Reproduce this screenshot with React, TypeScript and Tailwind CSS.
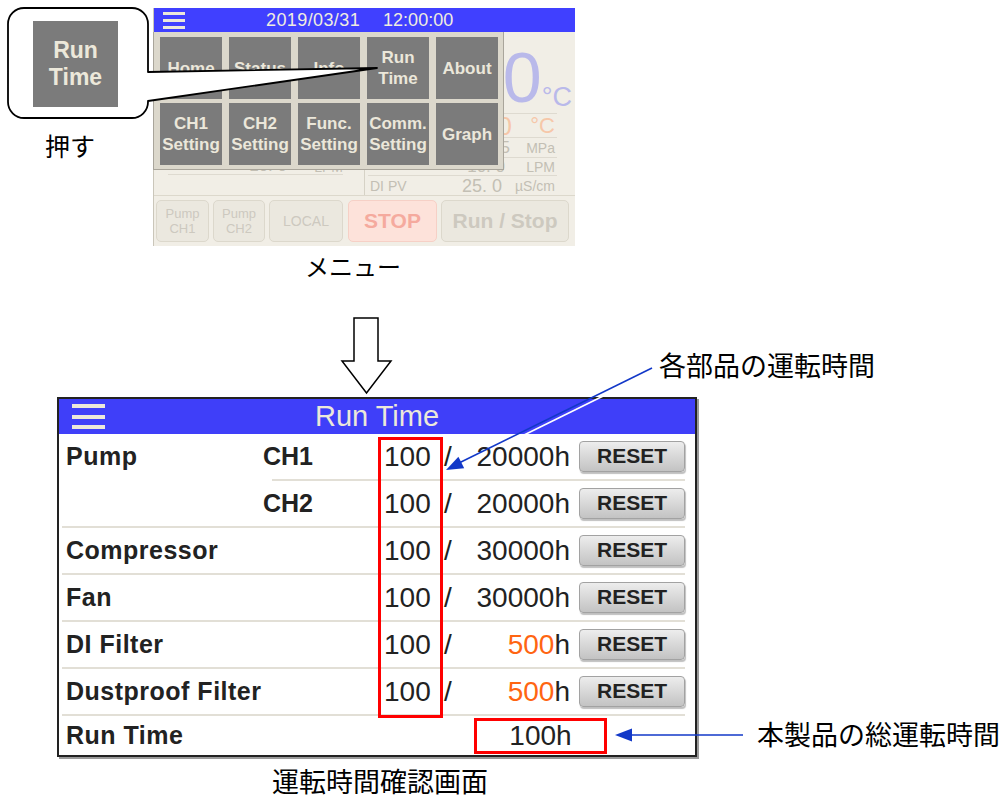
import React from "react";

const cream = "bg-[#ece8da]";

function Hamburger({ w, h, bar }: { w: string; h: string; bar: string }) {
  return (
    <div className={`flex flex-col justify-between ${w} ${h}`}>
      <div className={`${bar} ${cream} w-full`} />
      <div className={`${bar} ${cream} w-full`} />
      <div className={`${bar} ${cream} w-full`} />
    </div>
  );
}

function FadedRow({
  h,
  label,
  value,
  unit,
  valueCls,
  unitCls,
  unitW,
  clipW,
}: {
  h: string;
  label?: string;
  value: string;
  unit: string;
  valueCls: string;
  unitCls: string;
  unitW: string;
  clipW?: string;
}) {
  return (
    <div className={`${h} ml-[3px] mr-[18px] border-t border-[#dedad0] flex items-center pr-[2px]`}>
      <span className="flex-1 pl-[2px] text-[14px] leading-none text-[#c3bfb4]">{label}</span>
      {clipW ? (
        <div className={`${clipW} flex justify-end overflow-hidden`}>
          <span className={`shrink-0 leading-none whitespace-pre ${valueCls}`}>{value}</span>
        </div>
      ) : (
        <span className={`leading-none whitespace-pre ${valueCls}`}>{value}</span>
      )}
      <span className={`${unitW} text-right leading-none ${unitCls}`}>{unit}</span>
    </div>
  );
}

function MenuShot() {
  const menu = [
    ["Home"],
    ["Status"],
    ["Info"],
    ["Run", "Time"],
    ["About"],
    ["CH1", "Setting"],
    ["CH2", "Setting"],
    ["Func.", "Setting"],
    ["Comm.", "Setting"],
    ["Graph"],
  ];
  const faded = "bg-[#ebe8df] border border-[#dcd8cc] rounded-[5px] text-[#cdc9bf] flex flex-col items-center justify-center";
  return (
    <div className="absolute left-[153px] top-[8px] w-[422px] h-[238px] flex flex-col border-l border-[#cac6ba] bg-[#f1eee6]">
      <div className="h-[24px] shrink-0 bg-[#4040ff] flex items-center text-[#f0ece0] text-[18px] leading-none">
        <div className="ml-[9px]">
          <Hamburger w="w-[22px]" h="h-[17px]" bar="h-[3px]" />
        </div>
        <span className="ml-[81px] tracking-[0.4px]">2019/03/31</span>
        <span className="ml-[23px]">12:00:00</span>
      </div>
      <div className="relative flex-1 flex flex-col">
        <div className="h-[163px] grid grid-cols-[210px_1fr]">
          <div className="flex flex-col justify-end">
            <div className="h-[18px] ml-[14px] mr-[21px] border-b border-[#dedad0] flex items-end justify-end text-[17px] leading-none text-[#c3bfb4]">
              <span>10. 0</span>
              <span className="w-[56px] text-right text-[14px]">LPM</span>
            </div>
            <div className="h-[20px]" />
          </div>
          <div className="flex flex-col border-l border-[#d6d2c6]">
            <div className="h-[81px] flex justify-end pr-[3px] text-[#b9b9ea]">
              <span className="text-[70px] leading-none mt-[11px]">0</span>
              <span className="text-[27px] leading-none mt-[52px]">°C</span>
            </div>
            <FadedRow
              h="h-[24px]"
              value="0"
              unit="°C"
              valueCls="text-[26px] text-[#f6c7a9]"
              unitCls="text-[22px] text-[#f6c7a9]"
              unitW="w-[43px]"
              clipW="w-[8px]"
            />
            <FadedRow
              h="h-[20px]"
              value="5"
              unit="MPa"
              valueCls="text-[17px] text-[#c3bfb4]"
              unitCls="text-[14px] text-[#c3bfb4]"
              unitW="w-[45px]"
              clipW="w-[6px]"
            />
            <FadedRow
              h="h-[18px]"
              value="10. 0"
              unit="LPM"
              valueCls="text-[17px] text-[#c3bfb4]"
              unitCls="text-[14px] text-[#c3bfb4]"
              unitW="w-[50px]"
            />
            <FadedRow
              h="h-[20px]"
              label="DI PV"
              value="25. 0"
              unit="µS/cm"
              valueCls="text-[18px] text-[#c3bfb4]"
              unitCls="text-[14px] text-[#c3bfb4]"
              unitW="w-[53px]"
            />
          </div>
        </div>
        <div className="flex-1 border-t border-[#dcd8cc] flex items-center gap-[4px] pl-[2px]">
          <div className={`${faded} w-[53px] h-[42px] text-[13px] leading-[15px]`}>
            <span>Pump</span>
            <span>CH1</span>
          </div>
          <div className={`${faded} w-[52px] h-[42px] text-[13px] leading-[15px]`}>
            <span>Pump</span>
            <span>CH2</span>
          </div>
          <div className={`${faded} w-[74px] h-[42px] text-[14px]`}>LOCAL</div>
          <div className="ml-[1px] w-[89px] h-[42px] rounded-[5px] bg-[#fde2da] border border-[#f6d0c6] text-[#f5aa9e] font-bold text-[21px] flex items-center justify-center">
            STOP
          </div>
          <div className={`${faded} w-[128px] h-[42px] text-[21px] font-bold`}>Run / Stop</div>
        </div>
        <div className="absolute left-[-1px] top-0 w-[351px] h-[138px] bg-[#dcd8cc] border border-t-0 border-[#a9a59b] pl-[6px] pt-[5px] grid grid-cols-[repeat(5,62px)] grid-rows-[62px_62px] gap-x-[7px] gap-y-[4px]">
          {menu.map((m, i) => (
            <div
              key={i}
              className="bg-[#7b7b7b] flex flex-col items-center justify-center text-[17px] leading-[21px] font-bold text-[#ebe7da]"
            >
              {m.map((t) => (
                <span key={t}>{t}</span>
              ))}
            </div>
          ))}
        </div>
      </div>
    </div>
  );
}

type Row = { label: string; ch: string; limit: string; orange: boolean; sepMl: string };

function ResetBtn() {
  return (
    <div className="ml-[9px] w-[106px] h-[31px] shrink-0 rounded-[4px] border border-[#a2a2a2] bg-linear-to-b from-[#ededed] to-[#c3c3c3] shadow-[1px_2px_1px_rgba(0,0,0,0.25)] flex items-center justify-center pb-[3px] text-[21px] font-bold leading-none text-[#222]">
      RESET
    </div>
  );
}

function RunTimePanel() {
  const rows: Row[] = [
    { label: "Pump", ch: "CH1", limit: "20000", orange: false, sepMl: "ml-[213px]" },
    { label: "", ch: "CH2", limit: "20000", orange: false, sepMl: "ml-[3px]" },
    { label: "Compressor", ch: "", limit: "30000", orange: false, sepMl: "ml-[3px]" },
    { label: "Fan", ch: "", limit: "30000", orange: false, sepMl: "ml-[3px]" },
    { label: "DI Filter", ch: "", limit: "500", orange: true, sepMl: "ml-[3px]" },
    { label: "Dustproof Filter", ch: "", limit: "500", orange: true, sepMl: "ml-[3px]" },
  ];
  return (
    <div className="absolute left-[57px] top-[397px] w-[640px] h-[360px] border-2 border-[#222] bg-white shadow-[2px_2px_0_#9a9a9a] flex flex-col">
      <div className="h-[35px] shrink-0 bg-[#3f3ff9] grid grid-cols-[1fr_auto_1fr] items-center">
        <div className="pl-[13px]">
          <Hamburger w="w-[33px]" h="h-[25px]" bar="h-[4px]" />
        </div>
        <div className="text-[29px] leading-none text-[#ece8da] pb-[1px]">Run Time</div>
        <div />
      </div>
      {rows.map((r, i) => (
        <React.Fragment key={i}>
          <div className="h-[45px] shrink-0 flex items-center pl-[7px] pr-[10px]">
            <div className="w-[197px] text-[25px] font-bold leading-none tracking-[0.5px] text-[#222]">{r.label}</div>
            <div className="w-[118px] text-[25px] font-bold leading-none text-[#222]">{r.ch}</div>
            <div className="w-[63px] text-[28px] leading-none text-[#222] pl-[3px]">100</div>
            <div className="w-[8px] text-[28px] leading-none text-[#222]">/</div>
            <div className="flex-1 text-right text-[28px] leading-none text-[#222]">
              <span className={r.orange ? "text-[#ff6512]" : ""}>{r.limit}</span>h
            </div>
            <ResetBtn />
          </div>
          <div className={`h-[2px] shrink-0 bg-[#e2dfd6] ${r.sepMl} mr-[10px]`} />
        </React.Fragment>
      ))}
      <div className="flex-1 flex items-center pl-[7px]">
        <div className="w-[315px] text-[25px] font-bold leading-none tracking-[0.5px] text-[#222]">Run Time</div>
        <div className="w-[93px]" />
        <div className="w-[133px] h-[36px] border-[3px] border-[#ff0000] flex items-center justify-center text-[28px] leading-none text-[#222]">
          100h
        </div>
      </div>
      <div className="absolute left-[319px] top-[38px] w-[65px] h-[281px] border-[3px] border-[#ff0000]" />
    </div>
  );
}

function Overlay() {
  return (
    <svg className="absolute left-0 top-0 pointer-events-none" width="1008" height="798" viewBox="0 0 1008 798">
      <path
        d="M24,8 H132 A16,16 0 0 1 148,24 V72 L377,68 L148,101 V102 A16,16 0 0 1 132,118 H24 A16,16 0 0 1 8,102 V24 A16,16 0 0 1 24,8 Z"
        fill="#fff"
        stroke="#000"
        strokeWidth="1.8"
        strokeLinejoin="round"
      />
      <path
        d="M354,318 H378 V361 H391 L366.5,393 L342,361 H354 Z"
        fill="#fff"
        stroke="#000"
        strokeWidth="1.5"
      />
      <line x1="654" y1="371" x2="520" y2="437" stroke="#fff" strokeWidth="1.6" />
      <line x1="652" y1="368" x2="460" y2="462.5" stroke="#1238c8" strokeWidth="1.6" />
      <polygon points="446,470 464.2,468.3 458.4,456.7" fill="#1238c8" />
      <line x1="743" y1="735" x2="631" y2="735" stroke="#1238c8" strokeWidth="1.6" />
      <polygon points="615,735 632,728.5 632,741.5" fill="#1238c8" />
    </svg>
  );
}

export default function App() {
  return (
    <div className="relative w-[1008px] h-[798px] overflow-hidden bg-white font-['Liberation_Sans','Noto_Sans_CJK_JP',sans-serif] text-[#222]">
      <MenuShot />
      <RunTimePanel />
      <Overlay />
      <div className="absolute left-[33px] top-[21px] w-[85px] h-[86px] bg-[#7b7b7b] flex flex-col items-center justify-center text-[23px] font-bold leading-[27px] text-[#ece8da]">
        <span>Run</span>
        <span>Time</span>
      </div>
      <div className="absolute left-[45px] top-[133px] text-[25px] leading-none text-black font-['Noto_Sans_CJK_JP',sans-serif]">
        押す
      </div>
      <div className="absolute left-[305px] top-[254px] text-[24px] leading-none text-black font-['Noto_Sans_CJK_JP',sans-serif]">
        メニュー
      </div>
      <div className="absolute left-[659px] top-[351px] text-[27px] leading-none text-black font-['Noto_Sans_CJK_JP',sans-serif]">
        各部品の運転時間
      </div>
      <div className="absolute left-[757px] top-[720px] text-[27px] leading-none text-black font-['Noto_Sans_CJK_JP',sans-serif]">
        本製品の総運転時間
      </div>
      <div className="absolute left-[272px] top-[767px] text-[27px] leading-none text-black font-['Noto_Sans_CJK_JP',sans-serif]">
        運転時間確認画面
      </div>
    </div>
  );
}
